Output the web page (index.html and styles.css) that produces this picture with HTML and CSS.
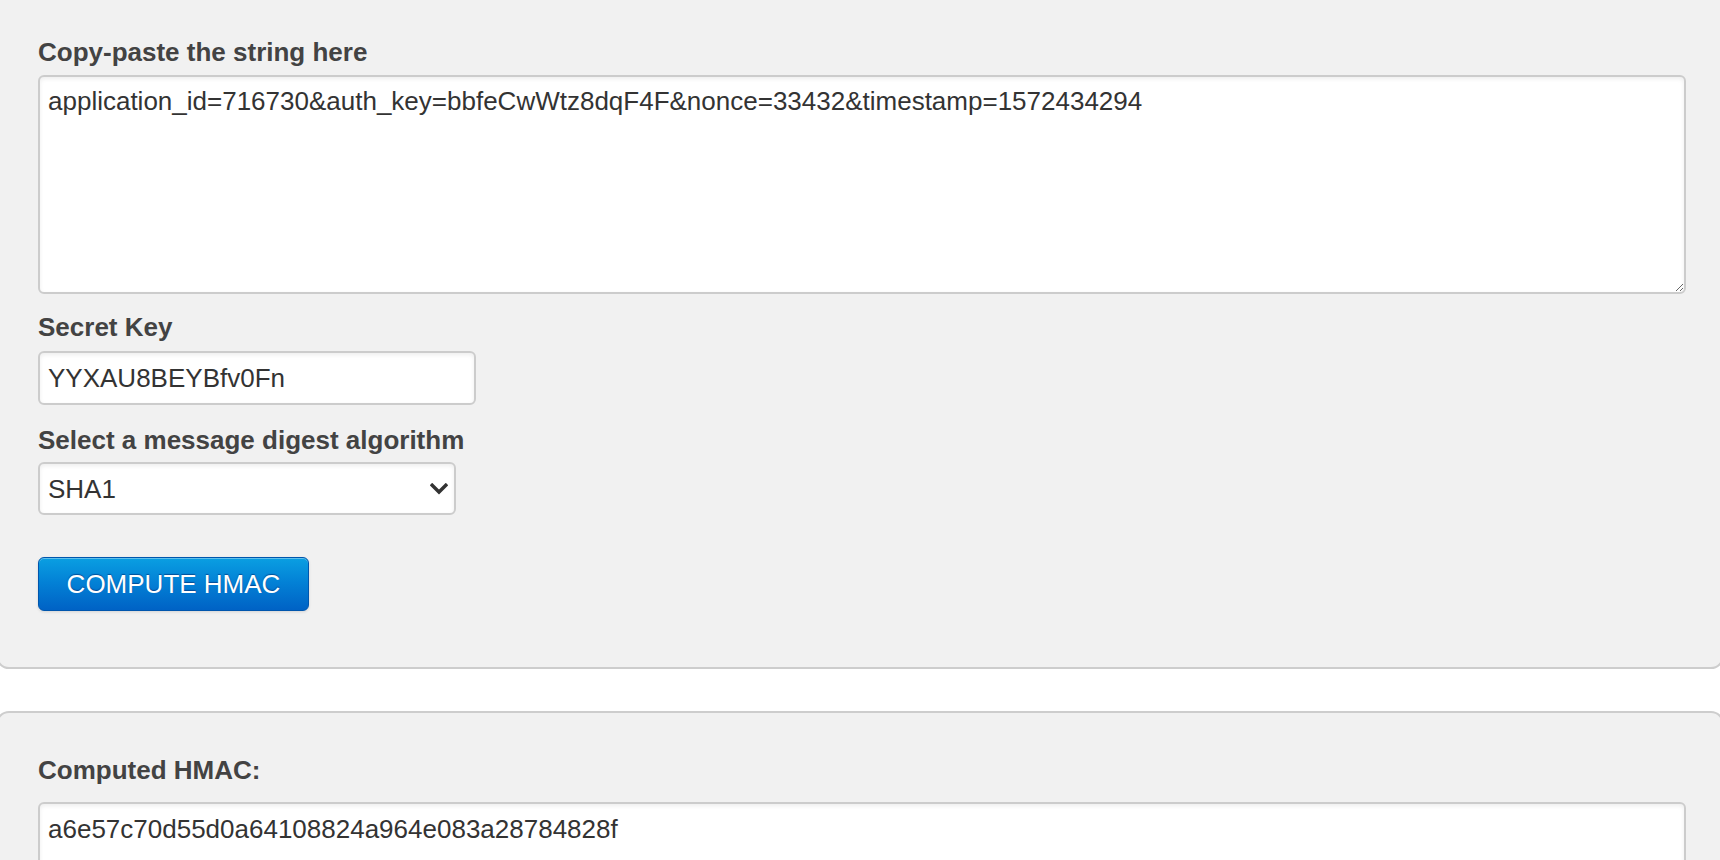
FILE: index.html
```html
<!DOCTYPE html>
<html lang="en">
<head>
<meta charset="utf-8">
<title>HMAC Generator</title>
<link rel="stylesheet" href="styles.css">
</head>
<body>
<main class="page">
  <section class="panel panel-form">
    <label class="field-label label-first" for="str">Copy-paste the string here</label>
    <textarea id="str" class="text-area">application_id=716730&amp;auth_key=bbfeCwWtz8dqF4F&amp;nonce=33432&amp;timestamp=1572434294</textarea>

    <label class="field-label label-key" for="key">Secret Key</label>
    <input id="key" class="text-input key-input" type="text" value="YYXAU8BEYBfv0Fn">

    <label class="field-label label-algo" for="algo">Select a message digest algorithm</label>
    <div class="select-wrap">
      <select id="algo" class="select">
        <option>SHA1</option>
        <option>SHA256</option>
        <option>MD5</option>
      </select>
      <svg class="chev" width="18" height="12" viewBox="0 0 18 12" aria-hidden="true">
        <path d="M2.2 2.2 L9 9 L15.8 2.2" fill="none" stroke="#333" stroke-width="3.4" stroke-linecap="square" stroke-linejoin="miter"/>
      </svg>
    </div>

    <button class="btn" type="button">COMPUTE HMAC</button>
  </section>

  <section class="panel panel-result">
    <label class="field-label label-result" for="out">Computed HMAC:</label>
    <input id="out" class="text-input result-input" type="text" value="a6e57c70d55d0a64108824a964e083a28784828f">
  </section>
</main>
</body>
</html>
```

FILE: styles.css
```css
html, body {
  margin: 0;
  padding: 0;
  background: #ffffff;
  overflow: hidden;
}

body {
  font-family: "Liberation Sans", Arial, Helvetica, sans-serif;
  font-size: 26px;
  color: #333333;
}

.page {
  display: flex;
  flex-direction: column;
  margin-top: -8px;
}

.panel {
  display: flex;
  flex-direction: column;
  align-items: flex-start;
  margin: 0 -4px;
  background: #f1f1f1;
  border: 2px solid #cdcdcd;
  border-radius: 13px;
}

.panel-form {
  padding: 43px 36px 56px 40px;
}

.panel-result {
  margin-top: 42px;
  padding: 42px 36px 40px 40px;
}

.field-label {
  display: block;
  font-weight: bold;
  font-size: 26px;
  line-height: 30px;
  color: #434343;
}

.label-first { margin-bottom: 8px; }
.label-key { margin-top: 18px; margin-bottom: 9px; }
.label-algo { margin-top: 20px; margin-bottom: 7px; }
.label-result { margin-bottom: 17px; }

.text-area,
.text-input,
.select {
  box-sizing: border-box;
  font-family: "Liberation Sans", Arial, Helvetica, sans-serif;
  font-size: 26px;
  color: #333333;
  background: #ffffff;
  border: 2px solid #cccccc;
  border-radius: 6px;
  box-shadow: inset 0 2px 4px rgba(0, 0, 0, 0.07);
  outline: none;
}

.text-area {
  display: block;
  width: 100%;
  height: 219px;
  padding: 9px 8px;
  line-height: 30px;
  resize: both;
}

.text-input {
  display: block;
  height: 54px;
  padding: 0 8px;
  line-height: 30px;
}

.key-input { width: 438px; }

.result-input {
  width: 100%;
  height: 80px;
  padding: 0 8px 26px;
}

.select-wrap {
  position: relative;
  width: 418px;
}

.select {
  display: block;
  width: 418px;
  height: 53px;
  padding: 0 40px 0 8px;
  line-height: 30px;
  -webkit-appearance: none;
  appearance: none;
}

.chev {
  position: absolute;
  right: 8px;
  top: 21px;
  pointer-events: none;
}

.btn {
  margin-top: 42px;
  box-sizing: border-box;
  height: 54px;
  width: 271px;
  padding: 0;
  font-family: "Liberation Sans", Arial, Helvetica, sans-serif;
  font-size: 26px;
  color: #ffffff;
  text-shadow: 0 -1px 1px rgba(0, 40, 110, 0.6);
  background: linear-gradient(to bottom, #0a9fe2 0%, #0382d6 45%, #0062c5 100%);
  border: 1px solid #0056ad;
  border-radius: 6px;
  box-shadow: inset 0 1px 0 rgba(255, 255, 255, 0.35), 0 1px 3px rgba(0, 0, 0, 0.12);
  cursor: pointer;
}
```
